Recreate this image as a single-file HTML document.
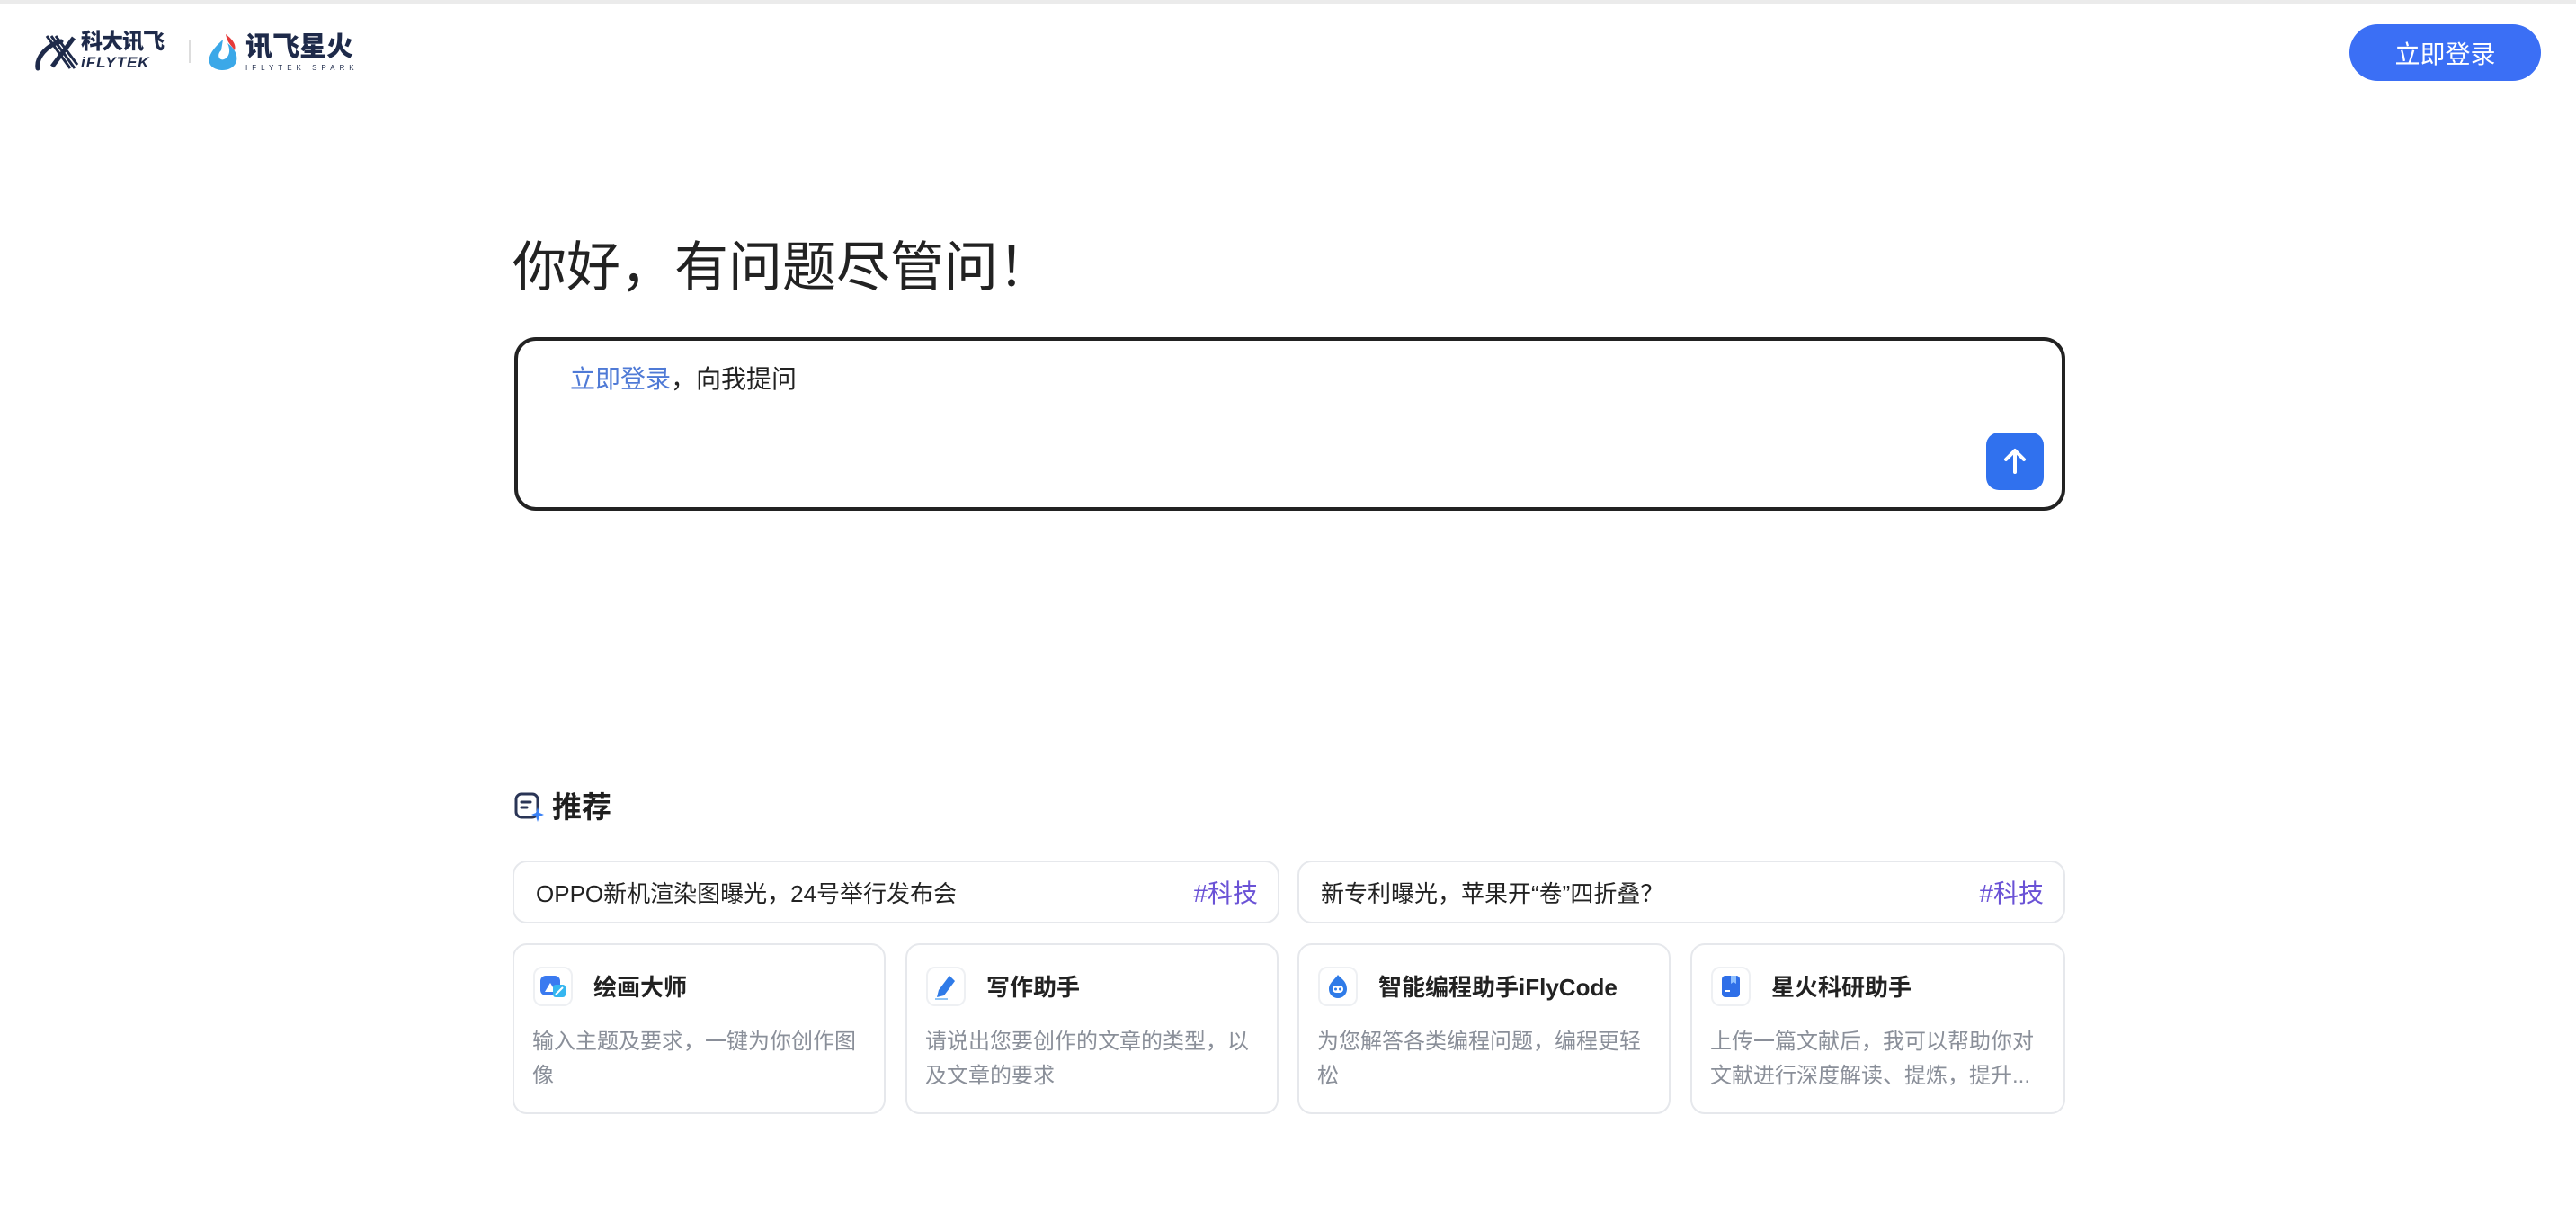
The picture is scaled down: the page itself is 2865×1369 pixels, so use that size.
<!DOCTYPE html>
<html><head><meta charset="utf-8">
<style>
*{margin:0;padding:0;box-sizing:border-box}
body{width:2865px;height:1369px;background:#fff;font-family:"Liberation Sans","Noto Sans CJK SC",sans-serif;position:relative;overflow:hidden;color:#1f1f1f}
.abs{position:absolute}
.topbar{left:0;top:0;width:2865px;height:5px;background:#ebebeb}
.btn{left:2613px;top:27px;width:213px;height:63px;border-radius:32px;background:#3b6ff5;color:#fff;font-size:28px;display:flex;align-items:center;justify-content:center}
h1{position:absolute;left:570px;top:253px;font-size:60px;font-weight:400;color:#222;line-height:90px}
.box{left:572px;top:375px;width:1725px;height:193px;border:4px solid #222;border-radius:24px}
.ph{left:634px;top:402px;font-size:28px;color:#222;line-height:40px}
.ph span{color:#4f7ad6}
.send{left:2209px;top:481px;width:64px;height:64px;border-radius:14px;background:#3071ee;display:flex;align-items:center;justify-content:center}
.rec{left:614px;top:876px;font-size:33px;font-weight:700;line-height:44px}
.c1{height:70px;border:2px solid #e6e8ec;border-radius:16px;top:957px;display:flex;align-items:center;justify-content:space-between;padding:0 22px 0 24px;font-size:26px;color:#222}
.c1 b{font-weight:400;color:#6a52d6;font-size:28px}
.c2{top:1049px;height:190px;width:415px;border:2px solid #e6e8ec;border-radius:16px}
.ic{position:absolute;left:21px;top:24px;width:44px;height:44px;border:2px solid #eef0f3;border-radius:10px;display:flex;align-items:center;justify-content:center}
.t{position:absolute;left:88px;top:28px;font-size:26px;font-weight:700;line-height:38px;color:#222}
.d{position:absolute;left:20px;top:89px;right:16px;font-size:24px;line-height:38px;color:#8a8f99}
</style></head><body>
<div class="abs topbar"></div>
<svg class="abs" style="left:38px;top:36px" width="50" height="44" viewBox="0 0 50 44">
<path d="M4 40 C2 28 14 14 30 10" stroke="#1e2a4a" stroke-width="5" fill="none" stroke-linecap="round"/>
<path d="M14 4 L40 40 M19 4 L45 40 M24 4 L48 36" stroke="#1e2a4a" stroke-width="3" fill="none"/>
<path d="M20 38 L44 6" stroke="#1e2a4a" stroke-width="5"/>
</svg>
<div class="abs" style="left:90px;top:33px;font-size:24px;font-weight:900;color:#1e2a4a;line-height:28px;letter-spacing:-1px">科大讯飞</div>
<div class="abs" style="left:90px;top:61px;font-size:17px;font-weight:900;color:#1e2a4a;line-height:18px;letter-spacing:1px;font-style:italic">iFLYTEK</div>
<div class="abs" style="left:210px;top:45px;width:2px;height:25px;background:#ddd"></div>
<svg class="abs" style="left:229px;top:36px" width="38" height="46" viewBox="0 0 38 46">
<path d="M19 8 C8 18 2 26 4 34 C7 44 30 46 34 32 C36 24 30 16 24 12 C28 20 26 28 20 30 C14 32 12 24 17 20 Z" fill="#3ba8e8"/>
<path d="M22 2 C30 8 34 14 32 20 C28 14 24 12 22 2Z" fill="#e63a3a"/>
</svg>
<div class="abs" style="left:273px;top:36px;font-size:30px;font-weight:900;color:#1e2a4a;line-height:34px">讯飞星火</div>
<div class="abs" style="left:273px;top:71px;font-size:8px;color:#1e2a4a;letter-spacing:5px;line-height:9px">IFLYTEK SPARK</div>

<div class="abs btn">立即登录</div>
<h1>你好，有问题尽管问！</h1>
<div class="abs box"></div>
<div class="abs ph"><span>立即登录</span>，向我提问</div>
<div class="abs send"><svg width="34" height="34" viewBox="0 0 34 34"><path d="M17 29 V6 M7 15 L17 5 L27 15" stroke="#fff" stroke-width="4" fill="none" stroke-linecap="round" stroke-linejoin="round"/></svg></div>

<svg class="abs" style="left:571px;top:880px" width="34" height="34" viewBox="0 0 34 34">
<rect x="3" y="3" width="24" height="26" rx="6" stroke="#2a3556" stroke-width="3" fill="none"/>
<path d="M9 12 H19 M9 18 H15" stroke="#2a3556" stroke-width="3" stroke-linecap="round"/>
<path d="M27 18 L29 24 L34 26 L29 28 L27 34 L25 28 L20 26 L25 24Z" fill="#3b82f6"/>
</svg>
<div class="abs rec">推荐</div>

<div class="abs c1" style="left:570px;width:853px">OPPO新机渲染图曝光，24号举行发布会<b>#科技</b></div>
<div class="abs c1" style="left:1443px;width:854px">新专利曝光，苹果开“卷”四折叠？<b>#科技</b></div>

<div class="abs c2" style="left:570px">
<div class="ic"><svg width="32" height="32" viewBox="0 0 32 32"><rect x="2" y="4" width="22" height="22" rx="6" fill="#3a7af0"/><path d="M7 22 L13 12 L19 22Z" fill="#fff"/><rect x="16" y="14" width="14" height="14" rx="3" fill="#35b6f0"/><path d="M19 25 L27 17" stroke="#fff" stroke-width="2"/></svg></div>
<div class="t">绘画大师</div><div class="d">输入主题及要求，一键为你创作图像</div></div>
<div class="abs c2" style="left:1007px">
<div class="ic"><svg width="32" height="32" viewBox="0 0 32 32"><path d="M20 4 L26 10 L14 26 L6 28 L8 20Z" fill="#2f7be8"/><path d="M4 30 H18" stroke="#8fc4f5" stroke-width="2"/></svg></div>
<div class="t">写作助手</div><div class="d">请说出您要创作的文章的类型，以及文章的要求</div></div>
<div class="abs c2" style="left:1443px">
<div class="ic"><svg width="32" height="32" viewBox="0 0 32 32"><path d="M16 3 C19 7 26 10 26 19 A10 10 0 0 1 6 19 C6 12 12 9 16 3Z" fill="#2f7be8"/><rect x="10" y="15" width="12" height="8" rx="4" fill="#fff"/><circle cx="13.5" cy="19" r="1.5" fill="#2f7be8"/><circle cx="18.5" cy="19" r="1.5" fill="#2f7be8"/></svg></div>
<div class="t">智能编程助手iFlyCode</div><div class="d">为您解答各类编程问题，编程更轻松</div></div>
<div class="abs c2" style="left:1880px;width:417px">
<div class="ic"><svg width="32" height="32" viewBox="0 0 32 32"><rect x="6" y="4" width="20" height="24" rx="4" fill="#2f6fe8"/><path d="M16 4 V13 L19 11 L22 13 V4Z" fill="#8fc0ff"/><path d="M10 21 H15" stroke="#fff" stroke-width="2"/></svg></div>
<div class="t">星火科研助手</div><div class="d">上传一篇文献后，我可以帮助你对文献进行深度解读、提炼，提升...</div></div>
</body></html>
